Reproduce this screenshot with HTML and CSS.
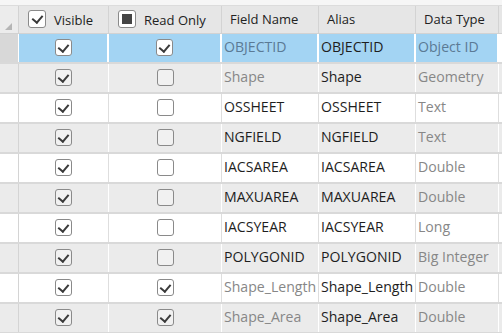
FILE: index.html
```html
<!DOCTYPE html>
<html lang="en">
<head>
  <meta charset="UTF-8" />
  <title>Fields</title>
  <link rel="stylesheet" href="styles.css">
</head>
<body>
  <div class="topbar"></div>
  <div class="fields">
    <!-- header -->
    <div class="row head">
      <div class="cell rh"><span class="corner"></span></div>
      <div class="cell"><span class="box big on"></span><span class="htext">Visible</span></div>
      <div class="cell"><span class="box big mixed"></span><span class="htext">Read Only</span></div>
      <div class="cell txt"><span class="htext">Field Name</span></div>
      <div class="cell txt"><span class="htext">Alias</span></div>
      <div class="cell txt"><span class="htext">Data Type</span></div>
      <div class="cell last"></div>
    </div>

    <div class="row sel">
      <div class="cell rh"></div>
      <div class="cell mid"><span class="box on"></span></div>
      <div class="cell mid"><span class="box on"></span></div>
      <div class="cell txt ro">OBJECTID</div>
      <div class="cell txt">OBJECTID</div>
      <div class="cell txt dim">Object ID</div>
      <div class="cell last"></div>
    </div>
    <div class="row alt">
      <div class="cell rh"></div>
      <div class="cell mid"><span class="box on"></span></div>
      <div class="cell mid"><span class="box"></span></div>
      <div class="cell txt ro">Shape</div>
      <div class="cell txt">Shape</div>
      <div class="cell txt dim">Geometry</div>
      <div class="cell last"></div>
    </div>
    <div class="row">
      <div class="cell rh"></div>
      <div class="cell mid"><span class="box on"></span></div>
      <div class="cell mid"><span class="box"></span></div>
      <div class="cell txt">OSSHEET</div>
      <div class="cell txt">OSSHEET</div>
      <div class="cell txt dim">Text</div>
      <div class="cell last"></div>
    </div>
    <div class="row alt">
      <div class="cell rh"></div>
      <div class="cell mid"><span class="box on"></span></div>
      <div class="cell mid"><span class="box"></span></div>
      <div class="cell txt">NGFIELD</div>
      <div class="cell txt">NGFIELD</div>
      <div class="cell txt dim">Text</div>
      <div class="cell last"></div>
    </div>
    <div class="row">
      <div class="cell rh"></div>
      <div class="cell mid"><span class="box on"></span></div>
      <div class="cell mid"><span class="box"></span></div>
      <div class="cell txt">IACSAREA</div>
      <div class="cell txt">IACSAREA</div>
      <div class="cell txt dim">Double</div>
      <div class="cell last"></div>
    </div>
    <div class="row alt">
      <div class="cell rh"></div>
      <div class="cell mid"><span class="box on"></span></div>
      <div class="cell mid"><span class="box"></span></div>
      <div class="cell txt">MAXUAREA</div>
      <div class="cell txt">MAXUAREA</div>
      <div class="cell txt dim">Double</div>
      <div class="cell last"></div>
    </div>
    <div class="row">
      <div class="cell rh"></div>
      <div class="cell mid"><span class="box on"></span></div>
      <div class="cell mid"><span class="box"></span></div>
      <div class="cell txt">IACSYEAR</div>
      <div class="cell txt">IACSYEAR</div>
      <div class="cell txt dim">Long</div>
      <div class="cell last"></div>
    </div>
    <div class="row alt">
      <div class="cell rh"></div>
      <div class="cell mid"><span class="box on"></span></div>
      <div class="cell mid"><span class="box"></span></div>
      <div class="cell txt">POLYGONID</div>
      <div class="cell txt">POLYGONID</div>
      <div class="cell txt dim">Big Integer</div>
      <div class="cell last"></div>
    </div>
    <div class="row">
      <div class="cell rh"></div>
      <div class="cell mid"><span class="box on"></span></div>
      <div class="cell mid"><span class="box on"></span></div>
      <div class="cell txt ro">Shape_Length</div>
      <div class="cell txt">Shape_Length</div>
      <div class="cell txt dim">Double</div>
      <div class="cell last"></div>
    </div>
    <div class="row alt">
      <div class="cell rh"></div>
      <div class="cell mid"><span class="box on"></span></div>
      <div class="cell mid"><span class="box on"></span></div>
      <div class="cell txt ro">Shape_Area</div>
      <div class="cell txt">Shape_Area</div>
      <div class="cell txt dim">Double</div>
      <div class="cell last"></div>
    </div>
  </div>
</body>
</html>
```

FILE: styles.css
```css
* { box-sizing: border-box; }
body {
  margin: 0;
  background: #fff;
  font-family: "Open Sans", "Noto Sans", sans-serif;
  font-size: 13px;
  color: #1e1e1e;
  overflow: hidden;
}

.topbar { height: 5px; background: #f6f6f6; }

/* grid rows */
.row {
  display: grid;
  grid-template-columns: 19px 90px 113px 97px 97px 83px 1fr;
  height: 30px;
  background: #fff;
  border-bottom: 2px solid #d9d9d9;
}
.cell {
  display: flex;
  align-items: center;
  border-right: 1px solid #dedede;
  white-space: nowrap;
  overflow: hidden;
}
.cell.mid { justify-content: center; }
.cell.txt { padding-left: 2px; padding-bottom: 3px; font-size: 14.1px; }
.cell.last { border-right: none; }
.cell.rh { border-right: 1px solid #d4d4d4; }

.row.alt { background: #ebebeb; }
.row.alt .cell { border-right-color: #fff; }
.row.alt .cell.rh { border-right-color: #d4d4d4; }
.row.alt .box { background: #f1f1f1; }

.row.sel { background: #a3d4f3; height: 30px; }
.row.sel .cell { border-right: 2px solid #fff; }
.row.sel .cell.rh { background: #d8d8d8; border-right: 1px solid #fff; }
.row.sel .cell.last { border-right: none; background: #fff; }

.ro, .dim { color: #878787; }
.row.sel .ro, .row.sel .dim { color: #5b7a95; }

/* header */
.row.head {
  height: 29px;
  background: #e6e6e6;
  border-top: 1px solid #dcdcdc;
  border-bottom: 1px solid #d2d2d2;
}
.row.head .cell { border-right-color: #d3d3d3; padding-left: 9px; }
.row.head .cell.txt { padding-left: 8px; padding-bottom: 2px; font-size: 13px; }
.row.head .cell.rh { padding-left: 0; background: #ececec; }
.htext { margin-left: 8px; color: #222; }
.row.head .cell.txt .htext { margin-left: 0; }
.corner {
  margin: 14px 0 0 5px;
  width: 0; height: 0;
  border-left: 7px solid transparent;
  border-bottom: 7px solid #b5b5b5;
}

/* checkboxes */
.box {
  position: relative;
  width: 17px; height: 17px;
  border: 1px solid #8a8a8a;
  border-radius: 3px;
  background: #fff;
  flex-shrink: 0;
  margin-bottom: 1px;
}
.box.big { width: 18px; height: 18px; }
.box.on::after {
  content: "";
  position: absolute;
  left: 4px; top: 2px;
  width: 5px; height: 8px;
  border-right: 2.4px solid #3a3a3a;
  border-bottom: 2.4px solid #3a3a3a;
  transform: rotate(40deg);
}
.box.big.on::after { left: 5px; top: 2px; }
.box.mixed::after {
  content: "";
  position: absolute;
  left: 3px; top: 3px;
  width: 10px; height: 10px;
  background: #444;
}
```
